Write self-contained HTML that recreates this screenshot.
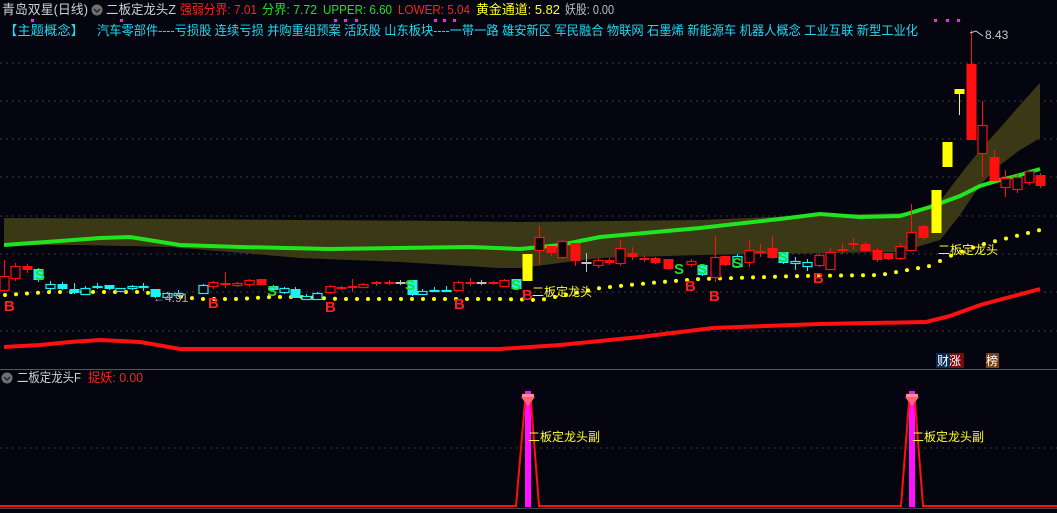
<!DOCTYPE html>
<html><head><meta charset="utf-8"><style>
html,body{margin:0;padding:0;background:#05050f;overflow:hidden}
svg{display:block}
text{font-family:"Liberation Sans","Noto Sans CJK SC",sans-serif}
</style></head><body>
<svg id="s" width="1057" height="513" viewBox="0 0 1057 513" xmlns="http://www.w3.org/2000/svg">
<rect width="1057" height="513" fill="#05050f"/>
<g stroke="#3a3a44" stroke-dasharray="2,4" stroke-width="1">
<line x1="0" y1="63" x2="1057" y2="63"/><line x1="0" y1="101" x2="1057" y2="101"/>
<line x1="0" y1="139" x2="1057" y2="139"/><line x1="0" y1="177" x2="1057" y2="177"/>
<line x1="0" y1="216" x2="1057" y2="216"/><line x1="0" y1="254" x2="1057" y2="254"/>
<line x1="0" y1="292" x2="1057" y2="292"/><line x1="0" y1="331" x2="1057" y2="331"/>
<line x1="0" y1="448" x2="1057" y2="448"/>
</g>
<polygon fill="#3b3816" points="4,218 185,219 300,220 453,221 520,222 700,220 820,215 900,213 935,208 960,175 980,150 1000,128 1020,105 1040,83 1040,138 1020,150 1000,165 980,185 960,215 940,240 900,252 700,255 600,258 520,268 500,268 400,262 300,258 230,252 170,247 80,245 4,245"/>
<polyline fill="none" stroke="#1fe51f" stroke-width="4" points="4,245 60,241 100,238 130,237 180,245 240,247 330,249 470,247 520,249 560,245 600,237 700,228 780,219 820,214 860,217 900,216 930,207 960,196 980,186 1000,180 1020,175 1040,169"/>
<polyline fill="none" stroke="#ff1010" stroke-width="4" points="4,347 40,345 70,342 100,340 140,342 180,349 500,349 560,345 640,337 713,328 820,324 926,322 950,316 980,305 1010,297 1040,289"/>
<g id="dots" fill="#ffff00"></g>
<g id="cand"></g>
<g font-size="15" font-weight="bold">
<text x="4" y="311" fill="#ff2020">B</text><text x="208" y="308" fill="#ff2020">B</text>
<text x="325" y="312" fill="#ff2020">B</text><text x="454" y="309" fill="#ff2020">B</text>
<text x="522" y="300" fill="#ff2020">B</text><text x="685" y="291" fill="#ff2020">B</text>
<text x="709" y="301" fill="#ff2020">B</text><text x="813" y="283" fill="#ff2020">B</text>
<text x="35" y="280" fill="#22dd22">S</text><text x="267" y="296" fill="#22dd22">S</text>
<text x="405" y="290" fill="#22dd22">S</text><text x="511" y="290" fill="#22dd22">S</text>
<text x="674" y="274" fill="#22dd22">S</text><text x="697" y="274" fill="#22dd22">S</text>
<text x="732" y="268" fill="#22dd22">S</text><text x="778" y="262" fill="#22dd22">S</text>
</g>
<text x="532" y="296" fill="#ffff30" font-size="12">二板定龙头</text>
<text x="938" y="254" fill="#ffff30" font-size="12">二板定龙头</text>
<text x="153" y="302" fill="#b0b0b0" font-size="12">←4.91</text>
<polyline points="970,33 976,31 983,36" fill="none" stroke="#ccc" stroke-width="1"/>
<text x="985" y="39" fill="#c8c8c8" font-size="12">8.43</text>
<rect x="936" y="353" width="14" height="15" fill="#0a2a55"/><rect x="950" y="353" width="14" height="15" fill="#7a0a0a"/>
<text x="937" y="365" fill="#fff" font-size="12">财涨</text>
<rect x="986" y="353" width="13" height="15" fill="#7a4010"/><text x="986" y="365" fill="#fff" font-size="12">榜</text>
<!-- header -->
<g font-size="13" lengthAdjust="spacingAndGlyphs">
<text x="2" y="14" fill="#d0d0d0" textLength="86" lengthAdjust="spacingAndGlyphs">青岛双星(日线)</text>
<text x="106" y="14" fill="#d0d0d0" textLength="70" lengthAdjust="spacingAndGlyphs">二板定龙头Z</text>
<text x="180" y="14" fill="#ff2020" textLength="77" lengthAdjust="spacingAndGlyphs">强弱分界: 7.01</text>
<text x="262" y="14" fill="#20e020" textLength="55" lengthAdjust="spacingAndGlyphs">分界: 7.72</text>
<text x="323" y="14" fill="#20e020" textLength="69" lengthAdjust="spacingAndGlyphs">UPPER: 6.60</text>
<text x="398" y="14" fill="#ff2020" textLength="72" lengthAdjust="spacingAndGlyphs">LOWER: 5.04</text>
<text x="476" y="14" fill="#ffff20" textLength="84" lengthAdjust="spacingAndGlyphs">黄金通道: 5.82</text>
<text x="565" y="14" fill="#c0c0c0" textLength="49" lengthAdjust="spacingAndGlyphs">妖股: 0.00</text>
</g>
<circle cx="97" cy="10" r="5.5" fill="#707070"/><polyline points="94,9 97,12 100,9" fill="none" stroke="#222" stroke-width="1.5"/>
<g fill="#ff20ff"><rect x="31" y="19" width="3" height="3"/><rect x="120" y="19" width="3" height="3"/><rect x="334" y="19" width="3" height="3"/><rect x="344" y="19" width="3" height="3"/><rect x="355" y="19" width="3" height="3"/><rect x="434" y="19" width="3" height="3"/><rect x="443" y="19" width="3" height="3"/><rect x="453" y="19" width="3" height="3"/><rect x="934" y="19" width="3" height="3"/><rect x="946" y="19" width="3" height="3"/><rect x="957" y="19" width="3" height="3"/></g>
<text x="4" y="35" font-size="13" fill="#20d8f0" textLength="80" lengthAdjust="spacingAndGlyphs">【主题概念】</text>
<text x="97" y="35" font-size="13" fill="#20d8f0" textLength="821" lengthAdjust="spacingAndGlyphs">汽车零部件----亏损股 连续亏损 并购重组预案 活跃股 山东板块----一带一路 雄安新区 军民融合 物联网 石墨烯 新能源车 机器人概念 工业互联 新型工业化</text>
<!-- lower panel -->
<line x1="0" y1="369.5" x2="1057" y2="369.5" stroke="#55555c" stroke-width="1"/>
<circle cx="7" cy="378" r="5.5" fill="#707070"/><polyline points="4,377 7,380 10,377" fill="none" stroke="#222" stroke-width="1.5"/>
<text x="17" y="382" font-size="13" fill="#d0d0d0" textLength="64" lengthAdjust="spacingAndGlyphs">二板定龙头F</text>
<text x="88" y="382" font-size="13" fill="#ff2020" textLength="55" lengthAdjust="spacingAndGlyphs">捉妖: 0.00</text>
<rect x="525" y="391" width="6" height="116" fill="#ff10ff"/>
<rect x="909" y="391" width="6" height="116" fill="#ff10ff"/>
<polyline fill="none" stroke="#ff1010" stroke-width="2" points="0,506 516,506 525,402 531,402 539,506 901,506 909,402 915,402 923,506 1057,506"/>
<polygon points="521,397 535,397 528,406" fill="#ff6080"/><rect x="522" y="394" width="12" height="3" fill="#ff9090"/>
<polygon points="905,397 919,397 912,406" fill="#ff6080"/><rect x="906" y="394" width="12" height="3" fill="#ff9090"/>
<text x="528" y="441" font-size="12" fill="#ffff30">二板定龙头副</text>
<text x="912" y="441" font-size="12" fill="#ffff30">二板定龙头副</text>
<line x1="0" y1="508.5" x2="1057" y2="508.5" stroke="#44444a"/>
</svg>
<script>
var NS="http://www.w3.org/2000/svg";
function el(g,t,a){var e=document.createElementNS(NS,t);for(var k in a)e.setAttribute(k,a[k]);g.appendChild(e);}
var dp=[[5,295],[50,292],[140,292],[200,299],[240,299],[270,297],[300,297],[340,299],[500,299],[540,300],[600,288],[650,283],[700,279],[800,276],[880,275],[930,266],[950,256],[980,245],[1000,240],[1040,230]];
var dg=document.getElementById('dots');
for(var x=5;x<=1040;x+=11){var y=dp[0][1];for(var i=0;i<dp.length-1;i++){if(x>=dp[i][0]&&x<=dp[i+1][0]){y=dp[i][1]+(dp[i+1][1]-dp[i][1])*(x-dp[i][0])/(dp[i+1][0]-dp[i][0]);}}if(x>dp[dp.length-1][0])y=dp[dp.length-1][1];el(dg,'circle',{cx:x,cy:y,r:2,fill:'#ffff00'});}
var R='#ff1010',C='#20f0f0';
var c=[[4,276,290,260,292,'o'],[15,266,278,263,281,'o'],[27,266,270,264,273,'r'],[38,269,280,268,282,'c'],[50,284,288,281,291,'h'],[62,284,289,282,290,'c'],[74,289,293,283,294,'c'],[85,288,294,286,295,'h'],[97,286,287,283,289,'h'],[109,285,289,285,290,'c'],[120,288,291,288,292,'h'],[132,286,288,285,290,'h'],[143,286,287,283,291,'h'],[155,289,297,289,298,'c'],[167,293,297,292,298,'h'],[178,293,295,290,297,'h'],[203,285,293,284,294,'h'],[213,282,286,281,289,'o'],[225,283,285,272,288,'r'],[237,283,285,282,287,'o'],[249,280,284,279,287,'o'],[261,279,285,279,285,'r'],[273,286,290,285,292,'c'],[284,288,292,287,294,'h'],[295,289,298,287,298,'c'],[306,296,299,294,300,'h'],[317,293,299,292,300,'h'],[330,286,292,285,294,'o'],[341,287,289,286,290,'r'],[352,286,288,279,292,'r'],[363,284,287,283,288,'o'],[376,282,284,281,286,'r'],[389,282,283,280,285,'r'],[400,282,283,280,285,'g'],[412,280,295,280,296,'c'],[422,291,294,289,295,'h'],[434,290,291,287,292,'h'],[446,290,291,286,292,'h'],[458,282,290,281,291,'o'],[470,282,284,278,286,'r'],[481,282,283,280,285,'g'],[493,282,284,281,285,'r'],[504,280,286,279,287,'o'],[516,279,289,279,290,'c'],[527,254,281,254,281,'y'],[539,237,250,226,265,'o'],[551,246,253,246,256,'r'],[562,241,257,239,259,'o'],[575,243,261,243,266,'r'],[586,262,263,253,272,'g'],[598,260,265,258,268,'o'],[609,260,263,258,265,'r'],[620,248,263,240,266,'o'],[632,253,257,247,260,'r'],[644,258,259,255,262,'r'],[655,258,263,257,264,'r'],[668,259,269,259,270,'r'],[691,261,264,259,267,'o'],[702,265,275,264,276,'c'],[715,257,277,236,282,'o'],[725,256,265,256,266,'r'],[737,256,266,254,268,'h'],[749,250,262,240,267,'o'],[760,251,253,244,257,'r'],[772,248,258,236,259,'r'],[783,252,263,252,264,'c'],[795,261,263,257,270,'h'],[807,262,266,259,271,'h'],[819,255,265,253,267,'o'],[830,252,269,248,270,'o'],[842,249,251,243,254,'r'],[853,243,245,238,250,'r'],[865,244,251,242,252,'r'],[877,250,260,248,262,'r'],[888,253,259,253,260,'r'],[900,246,258,243,260,'o'],[911,232,250,204,251,'o'],[923,226,238,225,240,'r'],[936,190,233,190,233,'y'],[947,142,167,142,167,'y'],[959,89,94,89,115,'y'],[971,64,140,30,140,'r'],[982,125,153,101,177,'o'],[994,157,181,150,181,'r'],[1005,178,187,170,197,'o'],[1017,177,189,173,193,'o'],[1029,171,182,169,185,'o'],[1040,175,186,173,188,'r']];
var g=document.getElementById('cand');
c.forEach(function(d){var x=d[0],t=d[1],b=d[2],col,fill;
 switch(d[5]){case'o':col=R;fill='none';break;case'r':col=R;fill=R;break;case'c':col=C;fill=C;break;case'h':col=C;fill='none';break;case'g':col='#c0c0c0';fill='#c0c0c0';break;case'y':col='#ffff00';fill='#ffff00';break;}
 el(g,'line',{x1:x+0.5,y1:d[3],x2:x+0.5,y2:t,stroke:col,'stroke-width':1});
 el(g,'line',{x1:x+0.5,y1:b,x2:x+0.5,y2:d[4],stroke:col,'stroke-width':1});
 var h=Math.max(b-t,1);
 if(fill==='none')el(g,'rect',{x:x-4,y:t+0.5,width:9,height:h,fill:'#05050f',stroke:col,'stroke-width':1.2});
 else el(g,'rect',{x:x-4.5,y:t,width:10,height:Math.max(h,2),fill:fill});
});
</script>
</body></html>
